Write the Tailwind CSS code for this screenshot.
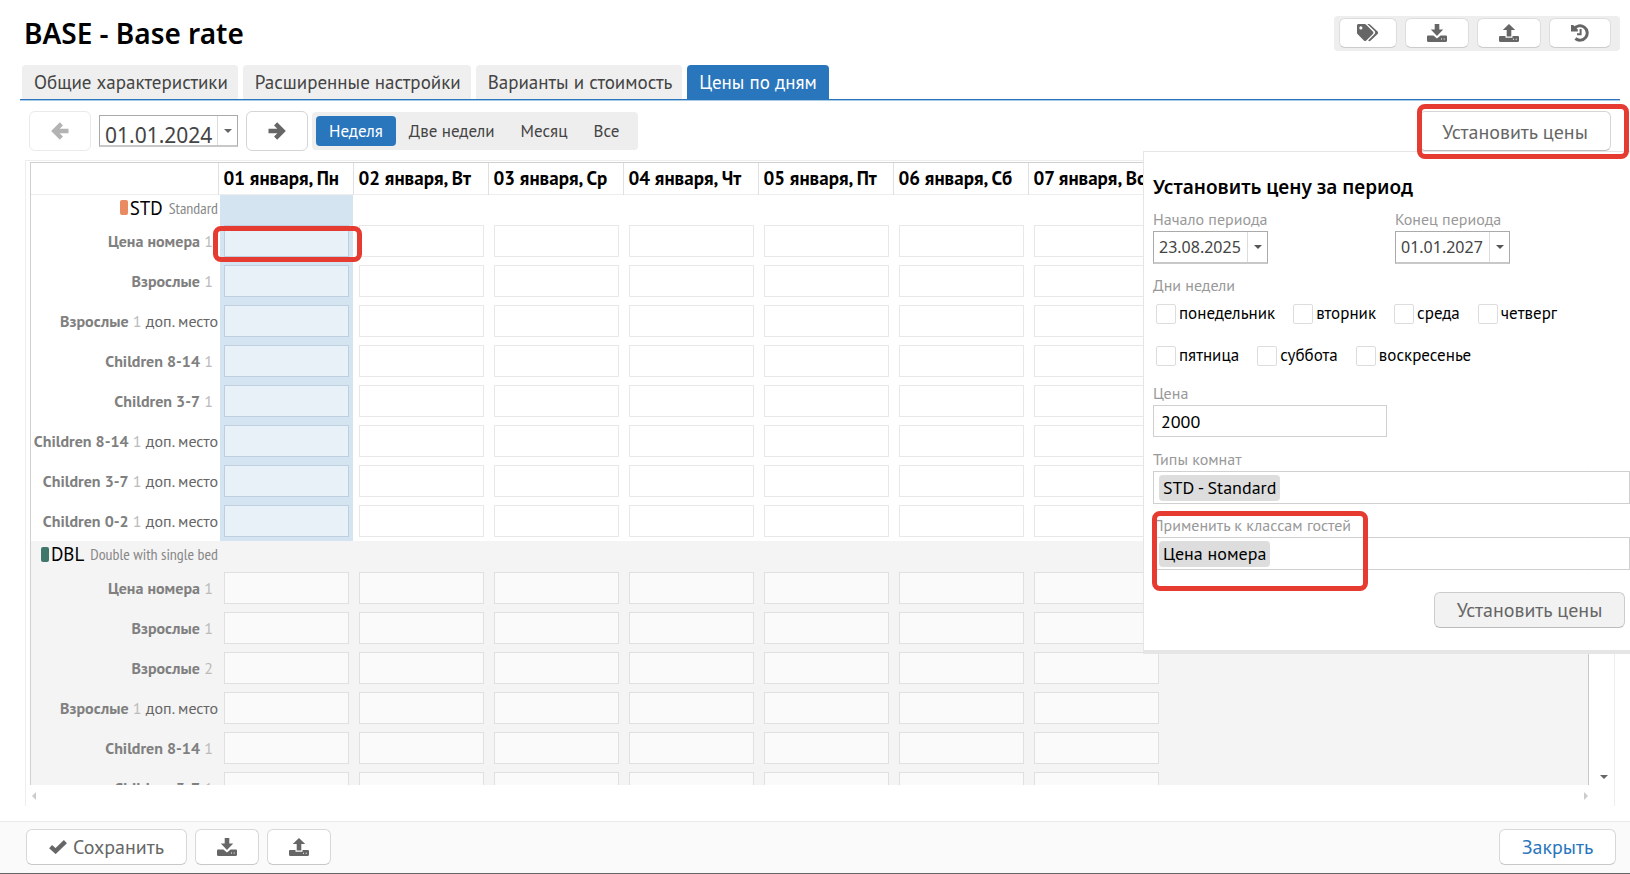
<!DOCTYPE html>
<html lang="ru">
<head>
    <meta charset="UTF-8">
    <meta name="viewport" content="width=device-width, initial-scale=1.0">
    <title>BASE - Base rate</title>
    <script src="https://cdn.jsdelivr.net/npm/@tailwindcss/browser@4"></script>
</head>
<body class="flex h-screen flex-col overflow-hidden bg-white font-['PT_Sans','Noto_Sans',sans-serif] text-[#666]">

    <!-- Icons -->
    <svg class="hidden">
        <symbol id="tags" viewBox="0 0 22 18">
            <path fill="currentColor" fill-rule="evenodd" d="M0 1.600C0 .7.7 0 1.600 0h6.100c.5 0 .9.2 1.200.5l7 7c.7.7.7 1.700 0 2.400l-6.600 6.600c-.7.7-1.700.7-2.400 0L.5 9.900c-.3-.3-.5-.7-.5-1.200zM3.900 2.300a1.600 1.600 0 1 0 0 3.200 1.600 1.600 0 0 0 0-3.200z"/>
            <path fill="currentColor" d="M10.300 0h1.500c.5 0 .9.2 1.200.5l7.600 7c.7.7.7 1.700 0 2.400l-6.900 6.700c-.7.7-1.600.7-2.300.1l-.3-.3 6.500-6.500c.8-.8.8-2 0-2.800z"/>
        </symbol>
        <symbol id="download" viewBox="0 0 20 18">
            <path fill="currentColor" d="M7.700 0h4.600v5.500h3.900L10 12 3.800 5.500h3.900z"/>
            <path fill="currentColor" fill-rule="evenodd" d="M1.200 11.500h5.200l3.600 3 3.600-3h5.200c.7 0 1.200.5 1.200 1.200v4.100c0 .7-.5 1.200-1.200 1.200H1.200C.5 18 0 17.500 0 16.800v-4.100c0-.7.5-1.200 1.200-1.200zM14 14.600v1h1v-1zm2.700 0v1h1v-1z"/>
        </symbol>
        <symbol id="upload" viewBox="0 0 20 18">
            <path fill="currentColor" d="M10 0l6.200 6h-3.900v6.500H7.700V6H3.800z"/>
            <path fill="currentColor" fill-rule="evenodd" d="M1.200 12h5.300v1.700h7V12h5.300c.7 0 1.200.5 1.200 1.200v3.600c0 .7-.5 1.200-1.200 1.200H1.200C.5 18 0 17.500 0 16.800v-3.600C0 12.500.5 12 1.200 12zM14 14.800v1h1v-1zm2.700 0v1h1v-1z"/>
        </symbol>
        <symbol id="history" viewBox="0 0 18 18">
            <path fill="none" stroke="currentColor" stroke-width="3" d="M3 5A7.200 7.200 0 1 1 4.400 14.500"/>
            <path fill="currentColor" d="M0 1v6.600h6.800V5.400L2.200 1z"/>
            <path fill="none" stroke="currentColor" stroke-width="2" d="M9.600 5v5.300H6"/>
        </symbol>
        <symbol id="arrow" viewBox="0 0 18 18">
            <path fill="none" stroke="currentColor" stroke-width="4.400" d="M0.500 9h14M7.600 1.900L14.700 9l-7.100 7.100"/>
        </symbol>
        <symbol id="check" viewBox="0 0 18 14">
            <path fill="none" stroke="currentColor" stroke-width="4.400" d="M1.600 6.600l5 4.500L16.400 1.700"/>
        </symbol>
        <symbol id="caret" viewBox="0 0 8 4">
            <path fill="currentColor" d="M0 0h8L4 4z"/>
        </symbol>
    </svg>

    <header class="flex items-start justify-between pt-4 pr-[10px] pl-6">
        <h1 class="font-['Noto_Sans',sans-serif] text-[28px] leading-[34px] font-semibold text-black">BASE - Base rate</h1>
        <div class="flex h-[35px] items-start gap-2 rounded-sm bg-[#eee] px-[5px] pt-[2px] pr-[9px]">
            <button aria-label="Теги" class="flex h-[30px] w-[58px] items-center justify-center rounded-md border border-[#ddd] border-b-[#ccc] bg-white"><svg class="h-[18px] w-[22px]"><use href="#tags"/></svg></button>
            <button aria-label="Скачать" class="flex h-[30px] w-16 items-center justify-center rounded-md border border-[#ddd] border-b-[#ccc] bg-white"><svg class="h-[18px] w-5"><use href="#download"/></svg></button>
            <button aria-label="Загрузить" class="flex h-[30px] w-16 items-center justify-center rounded-md border border-[#ddd] border-b-[#ccc] bg-white"><svg class="h-[18px] w-5"><use href="#upload"/></svg></button>
            <button aria-label="История" class="flex h-[30px] w-[62px] items-center justify-center rounded-md border border-[#ddd] border-b-[#ccc] bg-white"><svg class="size-[18px]"><use href="#history"/></svg></button>
        </div>
    </header>

    <nav class="mt-[14px] mr-[10px] ml-5 flex gap-[5px] border-b border-[#2a76bc] pl-[2px] text-[19px] leading-[34px] text-[#444] shadow-[0_1px_0_#a8cbe6]">
        <a href="#" class="rounded-t bg-[#efefef] pr-[10px] pl-3">Общие характеристики</a>
        <a href="#" class="rounded-t bg-[#efefef] pr-[10px] pl-3">Расширенные настройки</a>
        <a href="#" class="rounded-t bg-[#efefef] pr-[10px] pl-3">Варианты и стоимость</a>
        <a href="#" class="rounded-t bg-[#2a76bc] px-3 text-white">Цены по дням</a>
    </nav>

    <div class="relative z-10 mt-[11px] flex h-10 items-center pr-[19px] pl-[29px]">
        <button aria-label="Назад" disabled class="flex h-10 w-[62px] items-center justify-center rounded-md border border-[#eaeaea] text-[#b3b3b3]"><svg class="size-[18px] rotate-180"><use href="#arrow"/></svg></button>
        <div class="ml-2 flex h-8 w-[139px] border border-b-2 border-[#aaa] border-b-[#c8c8c8]">
            <input type="text" aria-label="Дата" value="01.01.2024" class="w-full min-w-0 flex-1 pt-2 pl-[5px] font-['Noto_Sans',sans-serif] text-[21px] leading-6 text-[#444] outline-none">
            <button aria-label="Календарь" class="flex w-5 items-center justify-center border-l border-[#ddd]"><svg class="h-1 w-2"><use href="#caret"/></svg></button>
        </div>
        <button aria-label="Вперёд" class="ml-2 flex h-10 w-[62px] items-center justify-center rounded-md border border-[#d5d5d5]"><svg class="size-[18px]"><use href="#arrow"/></svg></button>
        <div class="ml-1 flex h-[38px] items-center rounded bg-[#eee] pr-[6px] pl-1 text-[17px] text-[#444]">
            <button class="h-[30px] rounded bg-[#2a76bc] px-[13px] pt-px text-white">Неделя</button>
            <button class="h-[30px] px-[13px] pt-px">Две недели</button>
            <button class="h-[30px] px-[13px] pt-px">Месяц</button>
            <button class="h-[30px] px-[13px] pt-px">Все</button>
        </div>
        <div class="relative z-20 ml-auto">
            <button class="h-10 w-[192px] rounded-md border border-[#d5d5d5] border-b-[#bbb] bg-white pt-px text-[20px]">Установить цены</button>
            <div class="pointer-events-none absolute -top-[7px] -right-[18px] -bottom-2 -left-[2px] rounded-lg border-[5px] border-[#e53b30]"></div>
        </div>

        <!-- Price popup -->
        <form class="absolute top-full right-0 w-[487px] border-t border-b-4 border-l border-[#e5e5e5] bg-white/98 pt-[19px] pb-[22px] pl-[9px] text-[18px] text-black">
            <h2 class="font-['Noto_Sans',sans-serif] text-[19px] leading-8 font-semibold">Установить цену за период</h2>
            <div class="flex text-[16px]">
                <div class="w-[242px]">
                    <label for="from" class="block pt-1 leading-6 text-[#999]">Начало периода</label>
                    <div class="flex h-[33px] w-[115px] border border-b-2 border-[#aaa] border-b-[#c8c8c8]">
                        <input id="from" type="text" value="23.08.2025" class="min-w-0 flex-1 pl-[5px] font-['Noto_Sans',sans-serif] text-[#444] outline-none">
                        <button type="button" aria-label="Выбрать начало" class="flex w-5 items-center justify-center border-l border-[#ddd] text-[#555]"><svg class="h-1 w-2"><use href="#caret"/></svg></button>
                    </div>
                </div>
                <div>
                    <label for="to" class="block pt-1 leading-6 text-[#999]">Конец периода</label>
                    <div class="flex h-[33px] w-[115px] border border-b-2 border-[#aaa] border-b-[#c8c8c8]">
                        <input id="to" type="text" value="01.01.2027" class="min-w-0 flex-1 pl-[5px] font-['Noto_Sans',sans-serif] text-[#444] outline-none">
                        <button type="button" aria-label="Выбрать конец" class="flex w-5 items-center justify-center border-l border-[#ddd] text-[#555]"><svg class="h-1 w-2"><use href="#caret"/></svg></button>
                    </div>
                </div>
            </div>
            <fieldset>
                <legend class="pt-[9px] text-[16px] leading-6 text-[#999]">Дни недели</legend>
                <div id="days" class="flex flex-wrap gap-x-[18px] gap-y-[22px] pt-[7px] pr-[50px] pl-[3px]"></div>
            </fieldset>
            <label for="price" class="block pt-[15px] text-[16px] leading-6 text-[#999]">Цена</label>
            <input id="price" type="text" value="2000" class="block h-8 w-[234px] border border-[#d0d0d0] bg-white pl-[7px] outline-none">
            <div class="pt-[10px] text-[16px] leading-6 text-[#999]">Типы комнат</div>
            <div class="flex h-[33px] items-center border border-[#d0d0d0] pl-[5px]"><span class="h-[26px] rounded-sm bg-[#ddd] px-1 leading-[26px]">STD - Standard</span></div>
            <div class="relative">
                <div class="pt-[9px] text-[16px] leading-6 text-[#999]">Применить к классам гостей</div>
                <div class="flex h-[33px] items-center border border-[#d0d0d0] pl-[5px]"><span class="h-[26px] rounded-sm bg-[#ddd] px-1 leading-[26px]">Цена номера</span></div>
                <div class="pointer-events-none absolute top-[7px] -bottom-[21px] -left-px w-[216px] rounded-lg border-[5px] border-[#e53b30]"></div>
            </div>
            <div class="flex justify-end pt-[22px] pr-[5px]">
                <button type="button" class="h-9 w-[191px] rounded-md border border-[#ccc] border-b-[#bbb] bg-[#f2f2f2] text-[20px] text-[#666]">Установить цены</button>
            </div>
        </form>
    </div>

    <main class="mt-[9px] mr-[15px] mb-[15px] ml-[25px] flex min-h-0 flex-1 flex-col border-x border-t border-[#eee] pt-px pl-1">
        <div class="flex min-h-0 flex-1">
            <div class="min-w-0 flex-1 overflow-hidden border-x border-t border-[#d0d0d0] border-r-[#c8c8c8]">
                <table class="w-full table-fixed border-collapse">
                    <colgroup id="cols"></colgroup>
                    <thead>
                        <tr id="head" class="h-[31px] border-b border-[#eee] text-left text-[19px] leading-[30px] text-black"></tr>
                    </thead>
                    <tbody id="std"></tbody>
                    <tbody id="dbl" class="bg-[#f4f4f4]"></tbody>
                </table>
            </div>
            <div class="flex w-[25px] flex-col items-center justify-between py-[6px] pl-1">
                <svg class="h-1 w-2 rotate-180 text-[#ccc]"><use href="#caret"/></svg>
                <svg class="h-1 w-2"><use href="#caret"/></svg>
            </div>
        </div>
        <div class="flex h-[21px] items-center justify-between pr-6 text-[#ccc]">
            <svg class="h-1 w-2 rotate-90"><use href="#caret"/></svg>
            <svg class="h-1 w-2 -rotate-90"><use href="#caret"/></svg>
        </div>
    </main>

    <footer class="flex h-[53px] items-start gap-2 border-t border-b border-t-[#eaeaea] border-b-[#666] bg-[#fafafa] pt-[7px] pr-[14px] pl-[26px] text-[20px]">
        <button class="flex h-9 w-[161px] items-center justify-center gap-[6px] rounded-md border border-[#d8d8d8] border-b-[#c8c8c8] bg-white"><svg class="h-[14px] w-[18px]"><use href="#check"/></svg>Сохранить</button>
        <button aria-label="Скачать" class="flex h-9 w-16 items-center justify-center rounded-md border border-[#d8d8d8] border-b-[#c8c8c8] bg-white"><svg class="h-[18px] w-5"><use href="#download"/></svg></button>
        <button aria-label="Загрузить" class="flex h-9 w-16 items-center justify-center rounded-md border border-[#d8d8d8] border-b-[#c8c8c8] bg-white"><svg class="h-[18px] w-5"><use href="#upload"/></svg></button>
        <button class="ml-auto h-9 w-[117px] rounded-md border border-[#d8d8d8] border-b-[#c8c8c8] bg-white text-[#2a76bc]">Закрыть</button>
    </footer>

    <script>
        const days = ["01 января, Пн", "02 января, Вт", "03 января, Ср", "04 января, Чт", "05 января, Пт", "06 января, Сб", "07 января, Вс"];
        const std = [["Цена номера", 1], ["Взрослые", 1], ["Взрослые", 1, true], ["Children 8-14", 1], ["Children 3-7", 1], ["Children 8-14", 1, true], ["Children 3-7", 1, true], ["Children 0-2", 1, true]];
        const dbl = [["Цена номера", 1], ["Взрослые", 1], ["Взрослые", 2], ["Взрослые", 1, true], ["Children 8-14", 1], ["Children 3-7", 1]];
        const weekdays = ["понедельник", "вторник", "среда", "четверг", "пятница", "суббота", "воскресенье"];

        document.getElementById("cols").innerHTML = '<col class="w-[187px]">' + '<col class="w-[135px]">'.repeat(7) + "<col>";
        document.getElementById("head").innerHTML = '<th class="p-0"></th>' +
            days.map((d) => `<th class="border-l border-[#e0e0e0] p-0 pl-[5px] whitespace-nowrap">${d}</th>`).join("") + '<th class="border-l border-[#e0e0e0] p-0"></th>';

        function section(color, code, name, height, cell) {
            return `<tr class="${height}"><th class="p-0 font-normal"><div class="flex items-center justify-end leading-[26px] whitespace-nowrap">
                <span class="mr-[2px] h-[15px] w-2 rounded-xs ${color}"></span>
                <span class="text-[19px] text-black">${code}</span>
                <span class="ml-[6px] font-['PT_Sans_Narrow','PT_Sans','Noto_Sans',sans-serif] text-[16px] text-[#888]">${name}</span></div></th>
                <td class="p-0">${cell}</td><td colspan="7"></td></tr>`;
        }

        function row([name, count, extra], active, marked) {
            let html = `<tr class="h-10"><th class="p-0 text-right text-[16px] font-normal whitespace-nowrap ${extra ? "" : "pr-[5px]"}">
                <b class="text-[#808080]">${name}</b> <span class="text-[#bbb]">${count}</span>${extra ? " доп. место" : ""}</th>`;
            days.forEach((d, i) => {
                const on = active && i === 0;
                html += `<td class="relative h-10 p-0"><div class="flex h-10 items-center ${on ? "ml-[2px] bg-[#d4e4f1] pl-1" : "pl-[6px]"}">
                    <input type="text" aria-label="${name}, ${d}" class="h-8 w-[125px] border ${on ? "border-[#bfcfdf] bg-[#e8f0f8]" : active ? "border-[#e8e8e8] bg-white" : "border-[#e0e0e0] bg-[#fafafa]"}"></div>
                    ${on && marked ? '<div class="pointer-events-none absolute top-[5px] -right-[9px] -left-[5px] z-[5] h-9 rounded-lg border-[5px] border-[#e53b30]"></div>' : ""}</td>`;
            });
            return html + "<td></td></tr>";
        }

        document.getElementById("std").innerHTML =
            section("bg-[#ea8a60]", "STD", "Standard", "h-[26px]", '<div class="ml-[2px] h-[26px] bg-[#d4e4f1]"></div>') + std.map((r, i) => row(r, true, i === 0)).join("");
        document.getElementById("dbl").innerHTML =
            section("bg-[#41776b]", "DBL", "Double with single bed", "h-[27px]", "") + dbl.map((r) => row(r, false)).join("");

        document.getElementById("days").innerHTML = weekdays.map((d) =>
            `<label class="flex h-5 items-center gap-[3px] text-[17px]"><input type="checkbox" class="size-5 appearance-none rounded-xs border border-[#ddd] bg-white">${d}</label>`).join("");
    </script>

</body>
</html>
